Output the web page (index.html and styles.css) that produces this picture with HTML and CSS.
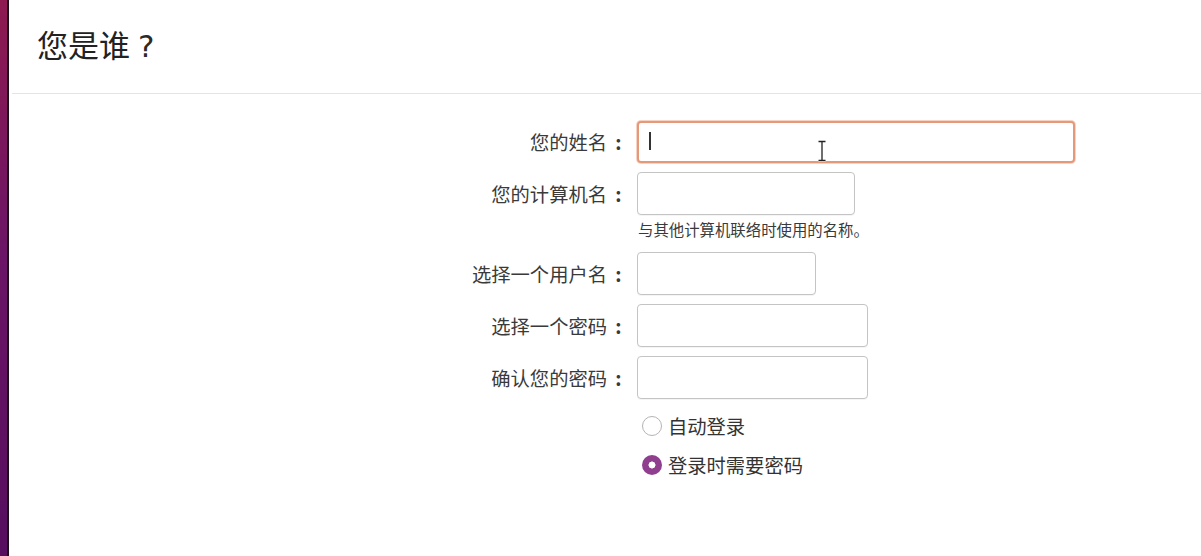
FILE: index.html
```html
<!DOCTYPE html>
<html lang="zh-CN">
<head>
<meta charset="utf-8">
<title>您是谁？</title>
<link rel="stylesheet" href="styles.css">
</head>
<body>
<div class="screen">
  <div class="strip"></div>
  <div class="edge"></div>
  <main class="panel">
    <header class="header">
      <h1 class="title">您是谁<span class="qmark">?</span></h1>
    </header>
    <form class="form">
      <label class="label">您的姓名<span class="colon">:</span></label>
      <div class="field">
        <div class="input input-focus w-438"><span class="caret"></span></div>
        <svg class="ibeam" width="10" height="22" viewBox="0 0 10 22"><path d="M1.5 1.5h7M5 1.5v19M1.5 20.5h7" stroke="#fff" stroke-width="3" fill="none"/><path d="M1.5 1.5h7M5 1.5v19M1.5 20.5h7" stroke="#222" stroke-width="1.3" fill="none"/></svg>
      </div>

      <label class="label">您的计算机名<span class="colon">:</span></label>
      <div class="field"><div class="input w-218"></div></div>

      <div class="hint">与其他计算机联络时使用的名称。</div>

      <label class="label">选择一个用户名<span class="colon">:</span></label>
      <div class="field"><div class="input w-179"></div></div>

      <label class="label">选择一个密码<span class="colon">:</span></label>
      <div class="field"><div class="input w-231"></div></div>

      <label class="label">确认您的密码<span class="colon">:</span></label>
      <div class="field"><div class="input w-231"></div></div>

      <div class="radio radio-first"><span class="dot"></span><span class="rtext">自动登录</span></div>
      <div class="radio"><span class="dot dot-on"></span><span class="rtext">登录时需要密码</span></div>
    </form>
  </main>
</div>
</body>
</html>
```

FILE: styles.css
```css
html, body {
  margin: 0;
  padding: 0;
  height: 100%;
  background: #fff;
}
body {
  font-family: "Noto Sans CJK SC", "Noto Sans", sans-serif;
  color: #333;
}
.screen {
  display: flex;
  width: 1201px;
  height: 556px;
  overflow: hidden;
}
.strip {
  width: 7px;
  flex: none;
  background: linear-gradient(to bottom, #8e1a50 0%, #6c1566 45%, #560e5e 100%);
}
.edge {
  width: 2px;
  flex: none;
  background: #1c0f1a;
}
.panel {
  flex: 1;
  display: flex;
  flex-direction: column;
  background: #fff;
}
.header {
  margin-left: 3px;
  border-bottom: 1px solid #e4e4e4;
  display: flex;
  align-items: center;
  padding-left: 25px;
  box-sizing: border-box;
  height: 94px;
}
.title {
  margin: 0 0 4px 0;
  font-size: 31px;
  font-weight: 400;
  color: #222;
  line-height: 1;
}
.qmark {
  display: inline-block;
  margin-left: 8px;
  font-family: "DejaVu Sans", sans-serif;
  font-size: 31px;
  color: #2a2a2a;
}
.form {
  display: grid;
  grid-template-columns: 200px auto;
  column-gap: 7px;
  row-gap: 9px;
  padding-top: 27px;
  padding-left: 421px;
  align-items: center;
  justify-content: start;
}
.label {
  text-align: right;
  font-size: 19.3px;
  line-height: 24px;
  color: #3a3a3a;
  white-space: nowrap;
}
.colon {
  display: inline-block;
  width: 23px;
  text-align: center;
  font-weight: 700;
}
.field {
  position: relative;
  display: flex;
}
.input {
  height: 43px;
  box-sizing: border-box;
  border: 1px solid #c4c4c4;
  border-radius: 4px;
  background: #fff;
  box-shadow: 0 1px 0 rgba(0,0,0,0.04);
  position: relative;
}
.input-focus {
  height: 42px;
  border: 2px solid #e4997a;
  box-shadow: 0 0 0 1px #f6d3c4;
}
.caret {
  position: absolute;
  left: 10px;
  top: 9px;
  width: 1.5px;
  height: 18px;
  background: #333;
}
.ibeam {
  position: absolute;
  left: 180px;
  top: 19px;
}
.w-438 { width: 438px; }
.w-218 { width: 218px; }
.w-179 { width: 179px; }
.w-231 { width: 231px; }
.hint {
  grid-column: 2;
  font-size: 15.4px;
  line-height: 19px;
  color: #3a3a3a;
  margin: -4px 0 4px 1px;
  white-space: nowrap;
}
.radio {
  grid-column: 2;
  display: flex;
  align-items: center;
  height: 30px;
  padding-left: 5px;
  gap: 6px;
}
.radio-first {
  margin-top: 3px;
}
.dot {
  width: 20px;
  height: 20px;
  box-sizing: border-box;
  border-radius: 50%;
  border: 1px solid #b4b4b4;
  background: #fff;
  flex: none;
}
.dot-on {
  border: none;
  background: radial-gradient(circle, #fff 0 3.2px, #8f3f8e 3.8px);
}
.rtext {
  font-size: 19.3px;
  line-height: 24px;
  color: #333;
}
```
